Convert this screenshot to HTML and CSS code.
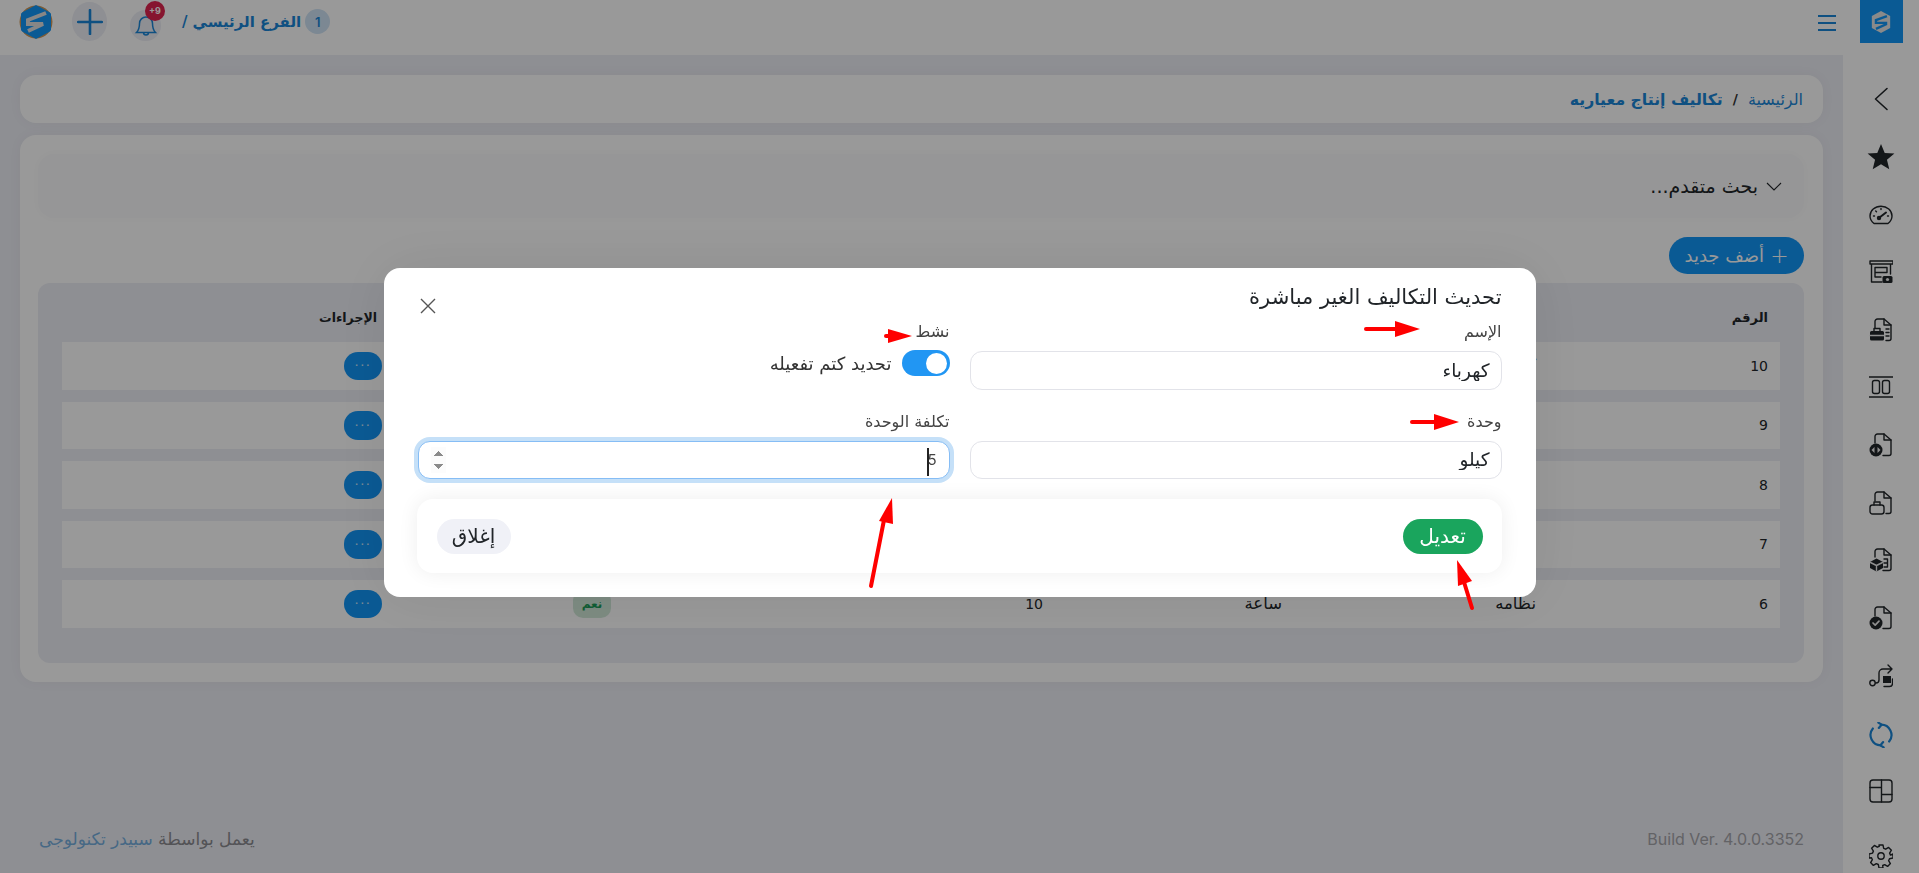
FILE: index.html
```html
<!DOCTYPE html>
<html lang="ar" dir="rtl">
<head>
<meta charset="utf-8">
<title>تكاليف إنتاج معياريه</title>
<link rel="stylesheet" href="styles.css">
</head>
<body>
<div class="app">
  <aside class="sidebar">
    <div class="side-logo">
      <svg viewBox="0 0 24 26" width="22" height="24"><path d="M12 1 22 6.500v13L12 25 2 19.500v-13z" fill="#e6e6e6"/><path d="M18.500 6.500 6.500 11v3h11v1.500l-11 5" fill="none" stroke="#1296f7" stroke-width="2.600"/></svg>
    </div>
    <nav class="side-nav">
      <a class="side-item"><svg viewBox="0 0 24 24" class="ico"><path d="M18 1.500 6.500 12 18 22.500" stroke-width="1.600"/></svg></a>
      <a class="side-item"><svg viewBox="0 0 24 24" class="ico ico-star"><path d="M12 .8l3.200 7.700 8.300.6-6.400 5.300 2 8.100L12 18.200l-7.100 4.300 2-8.100L.5 9.100l8.300-.6z" fill="#212529" stroke="none"/></svg></a>
      <a class="side-item"><svg viewBox="0 0 24 24" class="ico"><path d="M5 21.500C2.500 19.500 1 17 1 14a11 9.800 0 0 1 22 0c0 3-1.500 5.500-4 7.500z"/><path d="M10.500 15.500 17 10.500" stroke-width="2"/><circle cx="10" cy="16" r="1.500" fill="#212529"/><path d="M4.500 14h1M12 6.500v1M6.700 9l.8.8M18.500 14h1"/></svg></a>
      <a class="side-item"><svg viewBox="0 0 24 24" class="ico"><path d="M1 1h23v3H1zM2.500 4v18H13M21.500 4v10"/><path d="M6 7.500h12v5H6zM6 12.500V17h6"/><rect x="13.500" y="16" width="10" height="7" rx="1.500" fill="#212529" stroke="none"/><circle cx="18.500" cy="19.500" r="1.600" fill="#eee" stroke="none"/></svg></a>
      <a class="side-item"><svg viewBox="0 0 24 24" class="ico"><path d="M6 10V3.500A2.500 2.500 0 0 1 8.500 1H15l7 6v13.500a2 2 0 0 1-2 2h-3"/><path d="M15 1v6h7M17 11h3M17 14.500h3M17 18h3"/><path d="M1 14.500A1.500 1.500 0 0 1 2.500 13h11a1.500 1.500 0 0 1 1.500 1.500V21a1.500 1.500 0 0 1-1.500 1.500h-11A1.500 1.500 0 0 1 1 21z" fill="#212529" stroke="none"/><path d="M5 13v-2.500h6V13"/><path d="M1 17.500h14" stroke="#eee"/></svg></a>
      <a class="side-item"><svg viewBox="0 0 24 24" class="ico"><path d="M0 2h24M0 22h24"/><rect x="3.500" y="5.500" width="7" height="13" rx="2"/><rect x="13.500" y="5.500" width="7" height="13" rx="2"/></svg></a>
      <a class="side-item"><svg viewBox="0 0 24 24" class="ico"><path d="M6 10V3.500A2.500 2.500 0 0 1 8.500 1H15l7 6v13.500a2 2 0 0 1-2 2h-6"/><path d="M15 1v6h7"/><circle cx="7" cy="17" r="6.500" fill="#212529" stroke="none"/><polygon points="5.500,14 2.500,17 5.500,20" fill="#eee" stroke="none"/><polygon points="8.500,14 11.500,17 8.500,20" fill="#eee" stroke="none"/></svg></a>
      <a class="side-item"><svg viewBox="0 0 24 24" class="ico"><path d="M6 10V3.500A2.500 2.500 0 0 1 8.500 1H15l7 6v13.500a2 2 0 0 1-2 2h-3"/><path d="M15 1v6h7"/><rect x="1" y="14" width="14" height="9" rx="2.500"/><path d="M5 14v-3h6v3"/></svg></a>
      <a class="side-item"><svg viewBox="0 0 24 24" class="ico"><path d="M6 9V3.500A2.500 2.500 0 0 1 8.500 1H15l7 6v13.500a2 2 0 0 1-2 2h-6"/><path d="M15 1v6h7M15 11h3.500v8H15M15 15h3"/><path d="M7.500 10.500 14 14v6l-6.500 3.500L1 20v-6z" fill="#212529" stroke="none"/><path d="M1.500 14.500 7.500 17.500 13.500 14.500M7.500 17.500V23" stroke="#eee"/></svg></a>
      <a class="side-item"><svg viewBox="0 0 24 24" class="ico"><path d="M6 10V3.500A2.500 2.500 0 0 1 8.500 1H15l7 6v13.500a2 2 0 0 1-2 2h-6"/><path d="M15 1v6h7"/><circle cx="7" cy="17" r="6.500" fill="#212529" stroke="none"/><path d="M4 17l2.200 2.200L10 15.200" stroke="#eee" stroke-width="1.700"/></svg></a>
      <a class="side-item"><svg viewBox="0 0 24 24" class="ico"><circle cx="3.500" cy="19" r="2.700"/><path d="M6.500 19H7a3 3 0 0 0 3-3V9a4 4 0 0 1 4-4h9M19 1l4 4-4 4"/><rect x="14" y="12" width="8" height="7" fill="#212529" stroke="none"/><path d="M23.500 15v4.500a3 3 0 0 1-3 3H15"/></svg></a>
      <a class="side-item side-refresh"><svg viewBox="0 0 24 24" class="ico ico-active"><path d="M12 2.500A9.500 9.500 0 0 1 19.500 18M12 21.500A9.500 9.500 0 0 1 4.500 6"/><path d="M9.500 .5 12.500 2.500 10 5.500M14.500 23.500 11.500 21.500 14 18.500"/></svg></a>
      <a class="side-item"><svg viewBox="0 0 24 24" class="ico"><rect x="1" y="1" width="22" height="22" rx="3"/><path d="M1 8.500h11.500M12.500 1v22M12.500 15.500H23"/></svg></a>
      <a class="side-item side-gear"><svg viewBox="0 0 24 24" class="ico"><circle cx="12" cy="12" r="3.200"/><path d="M10 1h4l.7 3.300 2 .9 2.900-1.800 2.800 2.800-1.800 2.900.9 2L24 10v4l-3.500.7-.9 2 1.800 2.900-2.800 2.800-2.900-1.800-2 .9L14 24h-4l-.7-3.500-2-.9-2.900 1.800-2.800-2.800 1.800-2.900-.9-2L0 14v-4l3.500-.9.9-2L2.600 4.200l2.800-2.800 2.900 1.800 2-.9z"/></svg></a>
    </nav>
  </aside>

  <div class="page">
    <header class="topbar">
      <svg viewBox="0 0 24 24" class="menu-ico"><path d="M3 5h18M3 12h18M3 19h18"/></svg>
      <div class="top-left">
        <span class="branch-num">1</span>
        <span class="branch-name">الفرع الرئيسي</span>
        <span class="branch-slash">/</span>
        <span class="bell">
          <svg viewBox="0 0 24 24" width="24" height="24" class="bell-ico"><path d="M12 3a6.500 6.500 0 0 0-6.500 6.500c0 5-1 7-3 9h19c-2-2-3-4-3-9A6.500 6.500 0 0 0 12 3zM9.500 18.500a2.500 2.500 0 0 0 5 0"/></svg>
          <span class="bell-badge">+9</span>
        </span>
        <span class="add-circle">
          <svg viewBox="0 0 24 24" width="26" height="26" class="plus-ico"><path d="M12 1v22M1 12h22"/></svg>
        </span>
        <span class="brand">
          <svg viewBox="0 0 34 34" width="34" height="34"><circle cx="17" cy="17" r="16.500" fill="#d29a5a"/><path d="M17 0 32 8v18l-15 8-15-8V8z" fill="#1296f7"/><path d="M27 8 9 15v4h15L9 26" fill="none" stroke="#e0e0e0" stroke-width="4"/></svg>
        </span>
      </div>
    </header>

    <main class="content">
      <div class="crumbs card-soft">
        <a class="crumb-home">الرئيسية</a>
        <span class="crumb-sep">/</span>
        <strong class="crumb-here">تكاليف إنتاج معياريه</strong>
      </div>

      <section class="panel card-soft">
        <div class="search">
          <svg viewBox="0 0 16 16" class="search-chev"><path d="M1 5l7 7 7-7"/></svg>
          <span>بحث متقدم...</span>
        </div>
        <div class="tools">
          <a class="btn-add"><span class="btn-plus">+</span> أضف جديد</a>
        </div>
        <div class="table">
          <div class="thead">
            <span>الرقم</span><span></span><span></span><span></span><span></span><span class="th-actions">الإجراءات</span>
          </div>
          <div class="trow"><span class="num">10</span><span>كهرباء</span><span>كيلو</span><span class="num">5</span><span><em class="yes">نعم</em></span><span><a class="dots">···</a></span></div>
          <div class="trow"><span class="num">9</span><span>مياه</span><span>لتر</span><span class="num">10</span><span><em class="yes">نعم</em></span><span><a class="dots">···</a></span></div>
          <div class="trow"><span class="num">8</span><span>غاز</span><span>كيلو</span><span class="num">10</span><span><em class="yes">نعم</em></span><span><a class="dots">···</a></span></div>
          <div class="trow"><span class="num">7</span><span>صيانة</span><span>ساعة</span><span class="num">10</span><span><em class="yes">نعم</em></span><span><a class="dots">···</a></span></div>
          <div class="trow"><span class="num">6</span><span>نظامه</span><span>ساعة</span><span class="num">10</span><span><em class="yes">نعم</em></span><span><a class="dots">···</a></span></div>
        </div>
      </section>

      <footer class="foot">
        <span class="build">Build Ver. 4.0.0.3352</span>
        <span class="credit">يعمل بواسطة <a>سبيدر تكنولوجى</a></span>
      </footer>
    </main>
  </div>
</div>

<div class="backdrop">
  <div class="modal">
    <div class="modal-head">
      <h2>تحديث التكاليف الغير مباشرة</h2>
      <svg viewBox="0 0 16 16" class="modal-x"><path d="M1 1l14 14M15 1 1 15"/></svg>
    </div>
    <form class="form">
      <div class="field">
        <label>الإسم</label>
        <input class="input" type="text" value="كهرباء">
      </div>
      <div class="field">
        <label>نشط</label>
        <div class="switch-row">
          <span class="switch"><span class="knob"></span></span>
          <span class="switch-text">تحديد كتم تفعيله</span>
        </div>
      </div>
      <div class="field">
        <label>وحدة</label>
        <input class="input" type="text" value="كيلو">
      </div>
      <div class="field">
        <label>تكلفة الوحدة</label>
        <div class="num-wrap">
          <input class="input input-focus" type="number" value="5">
          <span class="ibeam"></span>
        </div>
      </div>
    </form>
    <div class="modal-foot">
      <button class="btn-save" type="button">تعديل</button>
      <button class="btn-close" type="button">إغلاق</button>
    </div>
  </div>
</div>

<svg class="arrows" viewBox="0 0 1919 873" width="1919" height="873">
  <path d="M1366 329H1396" class="shaft"/><polygon points="1395,321 1420,329 1395,337" class="head"/>
  <path d="M1412 422H1436" class="shaft"/><polygon points="1434,414 1459,422 1434,430" class="head"/>
  <path d="M886 336H892" class="shaft"/><polygon points="888,329 912,336 888,343" class="head"/>
  <path d="M871 586 884 520" class="shaft"/><polygon points="892,498 893,524 879,521" class="head"/>
  <path d="M1472 608 1464 582" class="shaft"/><polygon points="1457,560 1472,581 1458,586" class="head"/>
</svg>
</body>
</html>
```
FILE: styles.css
```css
* { box-sizing: border-box; }
html, body { margin: 0; height: 873px; overflow: hidden; }
body {
  font-family: "DejaVu Sans", sans-serif;
  color: #212529;
  background: #edeef5;
  font-size: 14px;
}
a { color: inherit; text-decoration: none; }
svg { display: block; }

.app { display: flex; height: 873px; }

/* sidebar */
.sidebar { width: 76px; flex: none; background: #fff; display: flex; flex-direction: column; align-items: center; overflow: hidden; }
.side-logo { width: 43px; height: 43px; flex: none; background: #1296f7; display: flex; align-items: center; justify-content: center; }
.side-nav { display: flex; flex-direction: column; margin-top: 27px; width: 100%; }
.side-item { height: 57.7px; flex: none; display: flex; align-items: center; justify-content: center; }
.side-gear { margin-top: 7px; }
.side-refresh .ico { margin-top: 3px; }
.ico { width: 24px; height: 24px; fill: none; stroke: #212529; stroke-width: 1.4; stroke-linecap: round; stroke-linejoin: round; }
.ico-star { width: 28px; height: 28px; }
.ico-active { stroke: #1a86d8; stroke-width: 2; width: 26px; height: 26px; }

/* topbar */
.page { flex: 1; min-width: 0; display: flex; flex-direction: column; }
.topbar { height: 55px; flex: none; background: #fff; display: flex; align-items: center; justify-content: space-between; padding: 0 4px 0 19px; }
.menu-ico { width: 24px; height: 24px; margin-top: -10px; fill: none; stroke: #1a86d8; stroke-width: 2; }
.top-left { display: flex; align-items: center; margin-top: -12px; }
.branch-num { width: 25px; height: 25px; border-radius: 50%; background: #cfe3f5; color: #1a86d8; display: flex; align-items: center; justify-content: center; font-size: 13px; font-weight: 600; font-family: "Inter", sans-serif; margin-left: 4px; }
.branch-name { font-size: 15px; font-weight: 700; color: #1a86d8; margin-left: 5px; }
.branch-slash { font-size: 15px; font-weight: 700; color: #1a86d8; margin-left: 21px; }
.bell { position: relative; width: 31px; height: 31px; border-radius: 50%; background: #edeef5; display: flex; align-items: center; justify-content: center; margin-left: 23px; margin-top: 8px; }
.bell-ico { fill: none; stroke: #1a86d8; stroke-width: 1.5; }
.bell-badge { position: absolute; top: -9px; left: 15px; width: 20px; height: 20px; border-radius: 50%; background: #e0234f; color: #fff; font: 700 9px/20px "Inter", sans-serif; text-align: center; direction: ltr; }
.add-circle { width: 35px; height: 39px; border-radius: 50%; background: #edeef5; display: flex; align-items: center; justify-content: center; margin-left: 19px; }
.plus-ico { fill: none; stroke: #1a86d8; stroke-width: 2.4; stroke-linecap: round; }
.brand { display: block; width: 34px; height: 34px; border-radius: 50%; overflow: hidden; }

/* content */
.content { flex: 1; min-height: 0; background: #edeef5; padding: 20px 20px 0; display: flex; flex-direction: column; }
.card-soft { background: #fff; border-radius: 16px; box-shadow: 0 0 14px rgba(0, 0, 0, .04); }
.crumbs { height: 48px; flex: none; display: flex; align-items: center; gap: 10px; padding: 0 20px; }
.crumb-home { color: #1a86d8; font-size: 16px; }
.crumb-sep { color: #333; font-weight: 700; }
.crumb-here { color: #1a86d8; font-weight: 700; font-size: 15.700px; }

.panel { height: 547px; flex: none; margin-top: 12px; padding: 19px 19px 19px 18px; display: flex; flex-direction: column; }
.search { height: 64px; flex: none; display: flex; align-items: center; gap: 8px; padding: 0 22px; font-size: 19px; background: #fbfbfc; border-radius: 16px; box-shadow: 0 0 10px rgba(0, 0, 0, .02); }
.search-chev { width: 16px; height: 16px; fill: none; stroke: #212529; stroke-width: 1.1; }
.tools { display: flex; margin-top: 19px; flex: none; }
.btn-add { width: 135px; height: 37px; border-radius: 19px; background: #1296f7; color: #fff; display: flex; align-items: center; justify-content: center; gap: 6px; font-size: 18px; }
.btn-plus { font-size: 22px; line-height: 1; font-weight: 300; }

.table { margin-top: 9px; flex: 1; background: #edeef5; border-radius: 12px; padding: 0 24px; display: flex; flex-direction: column; gap: 12px; }
.thead, .trow { display: grid; grid-template-columns: 232px 254px 239px 432px 229px 1fr; align-items: center; }
.thead { height: 47px; font-weight: 700; font-size: 13px; padding-top: 21px; }
.thead span, .trow > span { padding-right: 12px; }
.thead span.th-actions { padding-right: 17px; font-size: 12.500px; }
.trow { height: 47.500px; background: #fff; font-size: 16.500px; }
.trow > .num { font-size: 14px; }
.yes { font-style: normal; font-size: 12px; font-weight: 700; color: #1a9c58; background: #d1e9d9; border-radius: 10px; display: inline-block; height: 28px; line-height: 28px; width: 38px; text-align: center; }
.dots { width: 38px; height: 28.500px; border-radius: 14px; background: #1296f7; color: #cfe4f7; display: flex; align-items: center; justify-content: center; font-size: 13px; letter-spacing: 1.500px; }

.foot { flex: 1; display: flex; justify-content: space-between; align-items: flex-end; padding: 0 19px 24px; }
.build { font-family: "Inter", sans-serif; font-size: 16px; line-height: 20px; direction: ltr; color: #a5a5aa; }
.credit { color: #8a8a90; font-size: 17px; line-height: 20px; }
.credit a { color: #75aede; }

/* modal */
.backdrop { position: fixed; inset: 0; background: rgba(0, 0, 0, .4); display: flex; justify-content: center; align-items: flex-start; padding-top: 268px; }
.modal { width: 1152px; height: 329px; background: #fff; border-radius: 16px; padding: 16px 34px 0 33px; box-shadow: 0 0 60px rgba(0, 0, 0, .08); }
.modal-head { display: flex; justify-content: space-between; align-items: flex-start; height: 26px; }
.modal-head h2 { margin: 0; font-size: 21px; line-height: 26px; font-weight: 400; color: #212529; }
.modal-x { width: 16px; height: 16px; fill: none; stroke: #555; stroke-width: 1.4; margin: 14px 0 0 3px; }
.form { display: grid; grid-template-columns: 532px 532px; column-gap: 20px; row-gap: 22px; margin-top: 12px; }
.field label { display: block; height: 20px; line-height: 20px; font-size: 16px; color: #444; margin-bottom: 9px; }
.input { display: block; width: 100%; height: 38.500px; border: 1px solid #e2e3e9; border-radius: 12px; padding: 0 11px; font: 18.500px "DejaVu Sans", sans-serif; color: #212529; background: #fff; outline: none; }
.num-wrap { position: relative; }
.input-focus { border-color: #86bdf5; box-shadow: 0 0 0 4px #c5e0f8; padding: 0 12px 0 12px; font: 15px "Inter", sans-serif; color: #444; }
.input-focus::-webkit-inner-spin-button { opacity: 1; -webkit-appearance: inner-spin-button; height: 26px; }
.ibeam { position: absolute; top: 7px; right: 21px; width: 2px; height: 28px; background: #222; }
.switch-row { display: flex; align-items: center; gap: 10px; margin-top: -1px; }
.switch { width: 48px; height: 26px; border-radius: 13px; background: #2196f3; display: flex; align-items: center; justify-content: flex-start; padding-right: 3px; flex: none; }
.knob { width: 21px; height: 21px; border-radius: 50%; background: #fff; }
.switch-text { font-size: 18px; color: #333; }
.modal-foot { height: 74px; margin-top: 20px; border-radius: 16px; background: #fff; box-shadow: 0 0 20px rgba(0, 0, 0, .07); display: flex; align-items: center; justify-content: space-between; padding: 0 19px 0 20px; }
.modal-foot button { height: 35px; border: 0; border-radius: 18px; font: 20px "DejaVu Sans", sans-serif; padding: 0; }
.btn-save { width: 80px; background: #1aa55d; color: #fff; }
.btn-close { width: 74px; background: #f0f1f7; color: #212529; }

/* annotations */
.arrows { position: fixed; top: 0; left: 0; pointer-events: none; }
.shaft { stroke: #f00; stroke-width: 4; stroke-linecap: round; fill: none; }
.head { fill: #f00; }
```
